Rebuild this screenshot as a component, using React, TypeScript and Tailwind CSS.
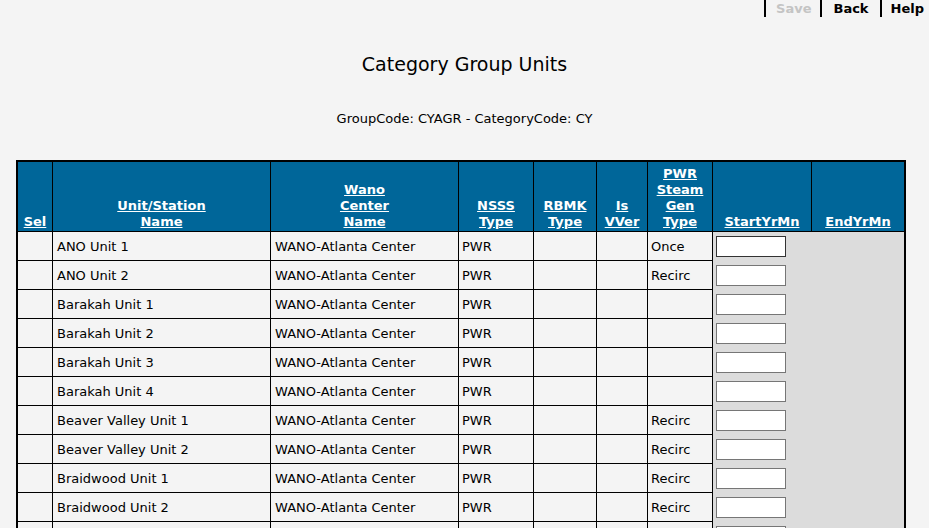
const rows = [
  { unit: "ANO Unit 1", center: "WANO-Atlanta Center", nsss: "PWR", steam: "Once" },
  { unit: "ANO Unit 2", center: "WANO-Atlanta Center", nsss: "PWR", steam: "Recirc" },
  { unit: "Barakah Unit 1", center: "WANO-Atlanta Center", nsss: "PWR", steam: "" },
  { unit: "Barakah Unit 2", center: "WANO-Atlanta Center", nsss: "PWR", steam: "" },
  { unit: "Barakah Unit 3", center: "WANO-Atlanta Center", nsss: "PWR", steam: "" },
  { unit: "Barakah Unit 4", center: "WANO-Atlanta Center", nsss: "PWR", steam: "" },
  { unit: "Beaver Valley Unit 1", center: "WANO-Atlanta Center", nsss: "PWR", steam: "Recirc" },
  { unit: "Beaver Valley Unit 2", center: "WANO-Atlanta Center", nsss: "PWR", steam: "Recirc" },
  { unit: "Braidwood Unit 1", center: "WANO-Atlanta Center", nsss: "PWR", steam: "Recirc" },
  { unit: "Braidwood Unit 2", center: "WANO-Atlanta Center", nsss: "PWR", steam: "Recirc" },
  { unit: "Browns Ferry Unit 1", center: "WANO-Atlanta Center", nsss: "BWR", steam: "" },
  { unit: "Browns Ferry Unit 2", center: "WANO-Atlanta Center", nsss: "BWR", steam: "" },
];

const headers = [
  ["Sel"],
  ["Unit/Station", "Name"],
  ["Wano", "Center", "Name"],
  ["NSSS", "Type"],
  ["RBMK", "Type"],
  ["Is", "VVer"],
  ["PWR", "Steam", "Gen", "Type"],
  ["StartYrMn"],
  ["EndYrMn"],
];

const App = () => {
  return (
    <div
      className="min-h-screen bg-[#f4f4f4] text-black text-[13px]"
      style={{ fontFamily: '"DejaVu Sans", Verdana, sans-serif' }}
    >
      <div className="flex justify-end h-[17px] font-bold leading-[17px]">
        <span className="border-l-2 border-black pl-[10px] pr-[9px] text-[#c4c4c4]">Save</span>
        <a href="#" className="border-l-2 border-black px-[11px]">Back</a>
        <a href="#" className="border-l-2 border-black pl-[9px] pr-[5px]">Help</a>
      </div>

      <h1 className="mt-[36px] text-center text-[19px] leading-[23px]">Category Group Units</h1>
      <p className="mt-[35px] text-center leading-[16px]">GroupCode: CYAGR - CategoryCode: CY</p>

      <div className="mt-[33px] ml-[16px] w-[890px] border-2 border-black">
        <div className="grid grid-cols-[35px_218px_188px_75px_63px_51px_65px_99px_92px]">
          {headers.map((h, i) => (
            <div
              key={i}
              className={
                "h-[70px] bg-[#006699] border-b border-black flex flex-col justify-end items-center pb-[1px] font-bold text-white leading-[16px] " +
                (i < headers.length - 1 ? "border-r" : "")
              }
            >
              {h.map((line, j) => (
                <a key={j} href="#" className="underline">
                  {line}
                </a>
              ))}
            </div>
          ))}

          {rows.map((r, idx) => (
            <div key={idx} className="contents">
              <div className="h-[29px] border-r border-b border-black"></div>
              <div className="h-[29px] border-r border-b border-black px-[4px] pt-[2px] flex items-center">{r.unit}</div>
              <div className="h-[29px] border-r border-b border-black px-[4px] pt-[2px] flex items-center">{r.center}</div>
              <div className="h-[29px] border-r border-b border-black px-[3px] pt-[2px] flex items-center">{r.nsss}</div>
              <div className="h-[29px] border-r border-b border-black"></div>
              <div className="h-[29px] border-r border-b border-black"></div>
              <div className="h-[29px] border-r border-b border-black px-[3px] pt-[2px] flex items-center">{r.steam}</div>
              <div className="h-[29px] bg-[#dcdcdc] pl-[3px] flex items-center">
                <input
                  type="text"
                  className={
                    "w-[70px] h-[21px] bg-white border " +
                    (idx === 0 ? "border-[#333333]" : "border-[#767676]")
                  }
                />
              </div>
              <div className="h-[29px] bg-[#dcdcdc]"></div>
            </div>
          ))}
        </div>
      </div>
    </div>
  );
};

export default App;
